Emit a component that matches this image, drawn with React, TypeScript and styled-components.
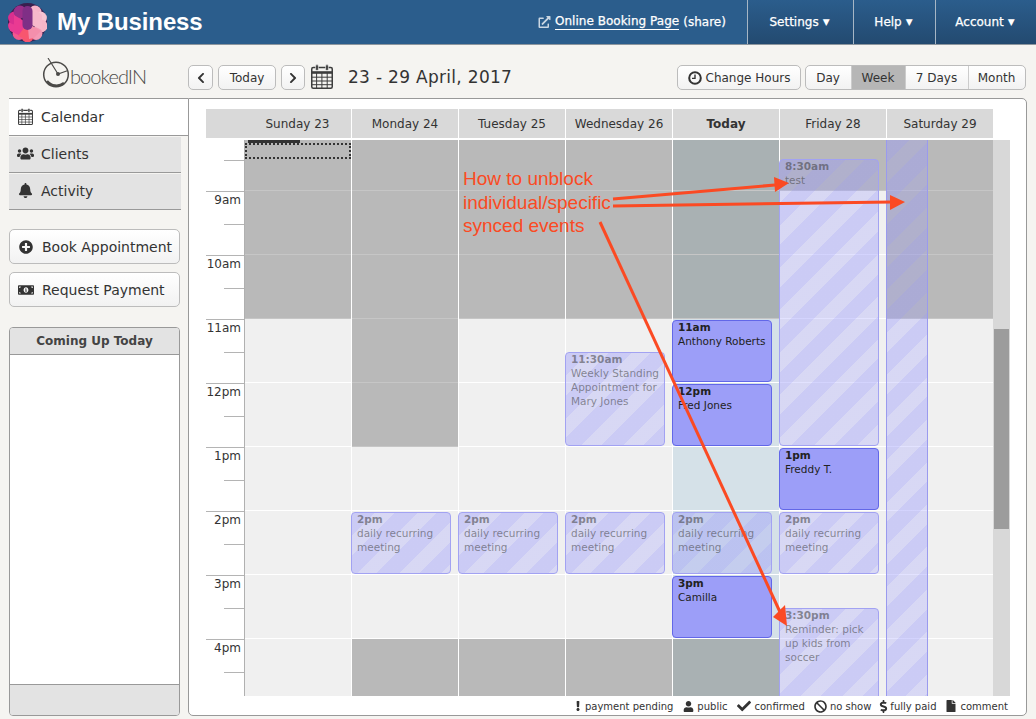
import React from "react";
import styled, { createGlobalStyle, css } from "styled-components";
import {
  FaUsers, FaBell, FaPlusCircle, FaMoneyBillAlt, FaChevronLeft, FaChevronRight,
  FaExclamation, FaUser, FaCheck, FaBan, FaDollarSign, FaFile, FaExternalLinkAlt,
} from "react-icons/fa";

const UI = `"DejaVu Sans", Verdana, sans-serif`;

const Global = createGlobalStyle`
  html, body { margin: 0; padding: 0; background: #f5f4f1; }
  body { font-family: ${UI}; color: #333; width: 1036px; height: 719px; overflow: hidden; }
  * { box-sizing: border-box; }
`;

const Page = styled.div`
  position: relative;
  width: 1036px;
  height: 719px;
  display: flex;
  flex-direction: column;
`;

const TopBar = styled.header`
  height: 45px;
  background: #2b5d8c;
  border-bottom: 1px solid #8d969e;
  display: flex;
  align-items: stretch;
  color: #fff;
  flex: none;
`;
const Brand = styled.div`
  display: flex;
  align-items: center;
  padding-left: 8px;
  gap: 10px;
  flex: 1;
  font: bold 24px "Liberation Sans", Arial, sans-serif;
  letter-spacing: -0.1px;
`;
const ShareLink = styled.div`
  display: flex;
  align-items: center;
  font-size: 12px;
  width: 209px;
  -webkit-text-stroke: 0.25px #fff;
  letter-spacing: 0.02px;
  svg { margin-right: 4px; width: 13px; height: 12px; opacity: 0.75; }
  u { text-decoration: none; border-bottom: 1px solid #fff; padding-bottom: 1px; margin-right: 4px; }
`;
const NavItem = styled.div<{ $w: number }>`
  width: ${(p) => p.$w}px;
  flex: none;
  display: flex;
  align-items: center;
  justify-content: center;
  gap: 4px;
  padding-right: 2px;
  font-size: 12px;
  -webkit-text-stroke: 0.25px #fff;
  border-left: 1px solid #a6b6c5;
  background: linear-gradient(#2b5d8c, #234a70);
`;
const Caret = styled.span`
  font-size: 9px;
  -webkit-text-stroke: 0;
`;

const Toolbar = styled.div`
  height: 53px;
  flex: none;
  display: flex;
  align-items: flex-start;
  padding: 20px 10px 0 42px;
`;
const LogoBox = styled.div`
  width: 146px;
  margin-top: -7px;
  display: flex;
  align-items: flex-start;
  svg { flex: none; }
`;
const LogoText = styled.span`
  color: #4b4a48;
  font: 300 20px/24px Lato, sans-serif;
  letter-spacing: -0.95px;
  margin-top: 6px;
`;
const Btn = styled.div<{ $w: number; $gap?: number }>`
  height: 25px;
  width: ${(p) => p.$w}px;
  margin-left: ${(p) => p.$gap ?? 0}px;
  display: flex;
  align-items: center;
  justify-content: center;
  gap: 4px;
  font-size: 12px;
  color: #333;
  background: linear-gradient(#fff, #f2f2f2);
  border: 1px solid #bcbcbc;
  border-radius: 5px;
  flex: none;
`;
const BigCalSlot = styled.span`
  margin-left: 6px;
  flex: none;
  display: inline-flex;
  margin-top: -1px;
`;
const Title = styled.div`
  font-size: 17px;
  color: #333;
  margin-left: 15px;
  line-height: 25px;
  letter-spacing: 0.3px;
`;
const Spacer = styled.div`
  flex: 1;
`;
const Segments = styled.div`
  display: flex;
  height: 25px;
  margin-left: 4px;
  border: 1px solid #bcbcbc;
  border-radius: 5px;
  overflow: hidden;
  background: linear-gradient(#fff, #f2f2f2);
`;
const Segment = styled.div<{ $w: number; $active?: boolean }>`
  width: ${(p) => p.$w}px;
  display: flex;
  align-items: center;
  justify-content: center;
  padding-right: 1px;
  font-size: 12px;
  & + & { border-left: 1px solid #ccc; }
  ${(p) => p.$active && css`background: #b6b6b6;`}
`;

const Body = styled.div`
  flex: 1;
  display: flex;
  align-items: stretch;
  padding: 0 9px 3px 9px;
  min-height: 0;
`;
const Sidebar = styled.aside`
  width: 179px;
  flex: none;
  display: flex;
  flex-direction: column;
  border-top: 1px solid #999;
`;
const ActiveTab = styled.div`
  height: 37px;
  background: #fff;
  border-bottom: 1px solid #999;
  display: flex;
  align-items: center;
  gap: 8px;
  padding-left: 9px;
  padding-bottom: 1px;
  font-size: 14px;
  flex: none;
  margin-bottom: 1px;
`;
const SideInner = styled.div`
  flex: 1;
  display: flex;
  flex-direction: column;
  min-height: 0;
  padding-right: 8px;
`;
const Tab = styled.div`
  height: 36px;
  background: #e3e3e3;
  border-bottom: 1px solid #999;
  margin-right: -1px;
  display: flex;
  align-items: center;
  gap: 7px;
  padding-left: 7px;
  padding-bottom: 2px;
  font-size: 14px;
  margin-bottom: 1px;
  flex: none;
`;
const IconSlot = styled.span`
  width: 18px;
  display: inline-flex;
  justify-content: center;
  color: #333;
`;
const SideBtn = styled.div<{ $top: number }>`
  height: 35px;
  margin-top: ${(p) => p.$top}px;
  border: 1px solid #bcbcbc;
  border-radius: 5px;
  background: linear-gradient(#fff, #f2f2f2);
  display: flex;
  align-items: center;
  padding-left: 8px;
  gap: 8px;
  font-size: 14px;
  flex: none;
`;
const BtnIcon = styled.span`
  width: 16px;
  display: inline-flex;
  justify-content: center;
  color: #333;
`;
const Upcoming = styled.div`
  margin-top: 20px;
  flex: 1;
  border: 1px solid #999;
  border-radius: 4px;
  background: #fff;
  display: flex;
  flex-direction: column;
  overflow: hidden;
`;
const UpcomingHead = styled.div`
  height: 27px;
  background: #e3e3e3;
  border-bottom: 1px solid #999;
  font-size: 12px;
  font-weight: bold;
  color: #444;
  display: flex;
  align-items: center;
  justify-content: center;
`;
const UpcomingBody = styled.div`
  flex: 1;
`;
const UpcomingFoot = styled.div`
  height: 31px;
  background: #e3e3e3;
  border-top: 1px solid #999;
`;

const Panel = styled.main`
  flex: 1;
  position: relative;
  background: #fff;
  border: 1px solid #999;
  border-radius: 0 5px 5px 5px;
  padding: 10px 16px 0 17px;
  display: flex;
  flex-direction: column;
  min-width: 0;
`;
const HeadRow = styled.div`
  display: flex;
  height: 29px;
  gap: 1px;
  flex: none;
  margin-bottom: 2px;
`;
const HeadCell = styled.div<{ $w: number; $today?: boolean }>`
  width: ${(p) => p.$w}px;
  background: #d9d9d9;
  display: flex;
  align-items: center;
  justify-content: center;
  font-size: 12px;
  font-weight: ${(p) => (p.$today ? "bold" : "normal")};
  padding-left: ${(p) => (p.$w > 120 ? 38 : 0)}px;
  color: #333;
`;
const GridWrap = styled.div`
  height: 556px;
  display: flex;
  overflow: hidden;
  flex: none;
`;
const Gutter = styled.div`
  width: 39px;
  flex: none;
  border-right: 1px solid #b0b0b0;
  background: #fff;
`;
const GutterHour = styled.div`
  height: 64px;
  position: relative;
  border-top: 1px solid #b4b4b4;
  font-size: 12px;
  color: #333;
  text-align: right;
  padding: 1px 3px 0 0;
  &::after {
    content: "";
    position: absolute;
    right: 0;
    top: 32px;
    width: 20px;
    border-top: 1px solid #b4b4b4;
  }
`;
const GutterTop = styled.div`
  height: 51px;
  position: relative;
  &::after {
    content: "";
    position: absolute;
    right: 0;
    top: 20px;
    width: 20px;
    border-top: 1px solid #b4b4b4;
  }
`;
const Days = styled.div`
  display: flex;
  width: 749px;
  flex: none;
`;
const Day = styled.div`
  width: 107px;
  flex: none;
  position: relative;
  border-right: 1px solid #fff;
`;
const Cell = styled.div<{ $h: number; $kind: "free" | "block" | "tfree" | "tblock" }>`
  height: ${(p) => p.$h}px;
  background: ${(p) =>
    ({ free: "#f0f0f0", block: "#b9b9b9", tfree: "#d5e1e8", tblock: "#a9b1b3" }[p.$kind])};
  border-bottom: 1px solid ${(p) => (p.$kind === "free" || p.$kind === "tfree" ? "#fff" : "#c6c6c6")};
`;
const eventBase = css<{ $top: number; $h: number }>`
  position: absolute;
  top: ${(p) => p.$top}px;
  height: ${(p) => p.$h}px;
  left: -1px;
  width: 100px;
  border-radius: 4px;
  font-size: 10.5px;
  line-height: 14px;
  padding: 0 5px;
  overflow: hidden;
  b { display: block; margin-top: -1px; }
`;
const SolidEvent = styled.div<{ $top: number; $h: number }>`
  ${eventBase}
  background: #9c9ef8;
  border: 1px solid #6267e8;
  color: #222;
`;
const stripes = `repeating-linear-gradient(135deg,
  rgba(152,152,252,.42) 0 16px, rgba(153,153,255,.28) 16px 30px)`;
const GhostEvent = styled.div<{ $top: number; $h: number; $bar?: boolean }>`
  ${eventBase}
  background: ${stripes};
  border: 1px solid #a2a2f2;
  color: rgba(60, 60, 60, 0.55);
  ${(p) => p.$bar && css`
    width: 42px;
    left: -1px;
    border-radius: 0;
    border-width: 0 1px;
    border-color: #9a9aee;
  `}
`;
const Scrollbar = styled.div`
  width: 17px;
  flex: none;
  margin-left: -1px;
  background: #d8d8d8;
  padding: 189px 1px 0;
  position: relative;
`;
const Thumb = styled.div`
  height: 200px;
  background: #9c9c9c;
`;
const Legend = styled.div`
  display: flex;
  justify-content: flex-end;
  align-items: center;
  height: 20px;
  padding-top: 1px;
  font-size: 10px;
  color: #333;
  margin-right: 2px;
`;
const LegendItem = styled.span`
  display: inline-flex;
  align-items: center;
  margin-left: 9px;
`;
const LegendIcon = styled.span<{ $w: number }>`
  width: ${(p) => p.$w}px;
  padding-right: 3px;
  display: inline-flex;
  justify-content: center;
  svg { flex: none; }
`;
const Overlay = styled.svg`
  position: absolute;
  left: 0;
  top: 0;
  pointer-events: none;
`;
const Note = styled.div`
  position: absolute;
  left: 463px;
  top: 167px;
  font: 19px/23.5px "Liberation Sans", Arial, sans-serif;
  color: #fb4a23;
`;
const Selection = styled.div`
  position: absolute;
  left: 0;
  top: 3px;
  width: 106px;
  height: 16px;
  border: 2px dotted #333;
`;
const SelectionBar = styled.div`
  position: absolute;
  left: 3px;
  top: 0;
  width: 52px;
  height: 3px;
  background: #333;
`;

const AppLogo = () => {
  const petals: [number, number, string][] = [
    [27, 9, "#f5b3c8"], [32.5, 15, "#f7c4d2"], [33, 23, "#f6b6c8"], [28, 30.5, "#f49ab6"],
    [19.5, 33, "#f8566f"], [11, 30.5, "#f2588f"], [6.5, 23, "#e93a94"], [6.5, 15, "#d92f8f"], [12, 9, "#9a2f8a"],
  ];
  return (
    <svg width="39" height="39" viewBox="0 0 39 39">
      <circle cx="19.5" cy="19.5" r="19.5" fill="#3a1f4f" />
      {petals.map(([x, y, c], i) => (
        <circle key={i} cx={x} cy={y} r="6.4" fill={c} />
      ))}
      <path d="M19.5 20 L6 12 L6 30 L19.5 36 Z" fill="#ea3a92" />
      <path d="M19.5 20 L10 33 L19 37 L27 33 Z" fill="#f8566f" />
      <path d="M19.5 20 L33 28 L26 35 L21 36 Z" fill="#f48fac" />
      <path d="M19.5 20 L24 4 L34 12 L34 27 Z" fill="#f6b8cb" />
      <rect x="14.5" y="3" width="10" height="24" rx="5" fill="#7f2f86" />
    </svg>
  );
};

const BookedLogo = () => (
  <svg width="28" height="30" viewBox="0 0 28 30">
    <circle cx="14" cy="16.5" r="12.3" fill="none" stroke="#4b4a48" strokeWidth="1.5" />
    <path d="M5 23 A12 12 0 0 0 22 25" fill="none" stroke="#4b4a48" strokeWidth="2.4" />
    <path d="M6 0 L16 16 L26 12.5" fill="none" stroke="#4b4a48" strokeWidth="1.1" />
    <circle cx="16" cy="16" r="2" fill="#4b4a48" />
  </svg>
);

const CalIcon = ({ w, h }: { w: number; h: number }) => (
  <svg width={w} height={h} viewBox="0 0 22 25" fill="none" stroke="#3d3d3d">
    <rect x="0.75" y="3.5" width="20.5" height="20.75" rx="1.5" strokeWidth="1.5" />
    <path d="M1 8.5 H21" strokeWidth="2.6" />
    <path d="M1 13.2 H21 M1 17 H21 M1 20.7 H21 M5.6 9 V24 M10.9 9 V24 M16.2 9 V24" strokeWidth="1" />
    <rect x="4.6" y="0.6" width="2.8" height="6" rx="1.4" fill="#3d3d3d" stroke="#fff" strokeWidth="0.6" />
    <rect x="14.6" y="0.6" width="2.8" height="6" rx="1.4" fill="#3d3d3d" stroke="#fff" strokeWidth="0.6" />
  </svg>
);

const ClockIcon = () => (
  <svg width="14" height="14" viewBox="0 0 14 14" fill="none" stroke="#333">
    <circle cx="7" cy="7" r="5.8" strokeWidth="2" />
    <path d="M7 3.4 V7.4 H4" strokeWidth="1.4" />
  </svg>
);

const times = ["9am", "10am", "11am", "12pm", "1pm", "2pm", "3pm", "4pm"];

type Seg = [number, "free" | "block" | "tfree" | "tblock"];

const rows = (blockUntil: number, blockFrom: number, free: "free" | "tfree", block: "block" | "tblock"): Seg[] => {
  const out: Seg[] = [[51, block]];
  for (let i = 0; i < 9; i++) {
    const hour = 9 + i;
    out.push([64, hour < blockUntil || hour >= blockFrom ? block : free]);
  }
  return out;
};

const DayCol = ({ segs, children }: { segs: Seg[]; children?: React.ReactNode }) => (
  <Day>
    {segs.map(([h, k], i) => (
      <Cell key={i} $h={h} $kind={k} />
    ))}
    {children}
  </Day>
);

const at = (h: number) => 51 + (h - 9) * 64;

export default function App() {
  return (
    <Page>
      <Global />
      <TopBar>
        <Brand>
          <AppLogo />
          My Business
        </Brand>
        <ShareLink>
          <FaExternalLinkAlt />
          <u>Online Booking Page</u> (share)
        </ShareLink>
        <NavItem $w={106}>Settings <Caret>▼</Caret></NavItem>
        <NavItem $w={82}>Help <Caret>▼</Caret></NavItem>
        <NavItem $w={101}>Account <Caret>▼</Caret></NavItem>
      </TopBar>
      <Toolbar>
        <LogoBox>
          <BookedLogo />
          <LogoText>bookedIN</LogoText>
        </LogoBox>
        <Btn $w={25}><FaChevronLeft size={12} /></Btn>
        <Btn $w={58} $gap={5}>Today</Btn>
        <Btn $w={24} $gap={5}><FaChevronRight size={12} /></Btn>
        <BigCalSlot><CalIcon w={22} h={25} /></BigCalSlot>
        <Title>23 - 29 April, 2017</Title>
        <Spacer />
        <Btn $w={124}><ClockIcon />Change Hours</Btn>
        <Segments>
          <Segment $w={45}>Day</Segment>
          <Segment $w={54} $active>Week</Segment>
          <Segment $w={63}>7 Days</Segment>
          <Segment $w={57}>Month</Segment>
        </Segments>
      </Toolbar>
      <Body>
        <Sidebar>
          <ActiveTab>
            <CalIcon w={15} h={17} />
            Calendar
          </ActiveTab>
          <SideInner>
            <Tab><IconSlot><FaUsers size={17} /></IconSlot>Clients</Tab>
            <Tab><IconSlot><FaBell size={15} /></IconSlot>Activity</Tab>
            <SideBtn $top={18}><BtnIcon><FaPlusCircle size={14} /></BtnIcon>Book Appointment</SideBtn>
            <SideBtn $top={8}><BtnIcon><FaMoneyBillAlt size={16} /></BtnIcon>Request Payment</SideBtn>
            <Upcoming>
              <UpcomingHead>Coming Up Today</UpcomingHead>
              <UpcomingBody />
              <UpcomingFoot />
            </Upcoming>
          </SideInner>
        </Sidebar>
        <Panel>
          <HeadRow>
            <HeadCell $w={145}>Sunday 23</HeadCell>
            <HeadCell $w={106}>Monday 24</HeadCell>
            <HeadCell $w={106}>Tuesday 25</HeadCell>
            <HeadCell $w={106}>Wednesday 26</HeadCell>
            <HeadCell $w={106} $today>Today</HeadCell>
            <HeadCell $w={106}>Friday 28</HeadCell>
            <HeadCell $w={106}>Saturday 29</HeadCell>
          </HeadRow>
          <GridWrap>
            <Gutter>
              <GutterTop />
              {times.map((t) => (
                <GutterHour key={t}>{t}</GutterHour>
              ))}
            </Gutter>
            <Days>
              <DayCol segs={rows(11, 99, "free", "block")}>
                <Selection />
                <SelectionBar />
              </DayCol>
              <DayCol segs={rows(13, 16, "free", "block")}>
                <GhostEvent $top={at(14) + 1} $h={62}><b>2pm</b>daily recurring meeting</GhostEvent>
              </DayCol>
              <DayCol segs={rows(11, 16, "free", "block")}>
                <GhostEvent $top={at(14) + 1} $h={62}><b>2pm</b>daily recurring meeting</GhostEvent>
              </DayCol>
              <DayCol segs={rows(11, 16, "free", "block")}>
                <GhostEvent $top={at(11) + 33} $h={94}><b>11:30am</b>Weekly Standing Appointment for Mary Jones</GhostEvent>
                <GhostEvent $top={at(14) + 1} $h={62}><b>2pm</b>daily recurring meeting</GhostEvent>
              </DayCol>
              <DayCol segs={rows(11, 16, "tfree", "tblock")}>
                <SolidEvent $top={at(11) + 1} $h={62}><b>11am</b>Anthony Roberts</SolidEvent>
                <SolidEvent $top={at(12) + 1} $h={62}><b>12pm</b>Fred Jones</SolidEvent>
                <GhostEvent $top={at(14) + 1} $h={62}><b>2pm</b>daily recurring meeting</GhostEvent>
                <SolidEvent $top={at(15) + 1} $h={62}><b>3pm</b>Camilla</SolidEvent>
              </DayCol>
              <DayCol segs={rows(9, 99, "free", "block")}>
                <GhostEvent $top={19} $h={287}><b>8:30am</b>test</GhostEvent>
                <SolidEvent $top={at(13) + 1} $h={62}><b>1pm</b>Freddy T.</SolidEvent>
                <GhostEvent $top={at(14) + 1} $h={62}><b>2pm</b>daily recurring meeting</GhostEvent>
                <GhostEvent $top={at(15) + 33} $h={110}><b>3:30pm</b>Reminder: pick up kids from soccer</GhostEvent>
              </DayCol>
              <DayCol segs={rows(11, 99, "free", "block")}>
                <GhostEvent $top={0} $h={556} $bar />
              </DayCol>
            </Days>
            <Scrollbar><Thumb /></Scrollbar>
          </GridWrap>
          <Legend>
            <LegendItem><LegendIcon $w={10}><FaExclamation size={10} /></LegendIcon>payment pending</LegendItem>
            <LegendItem><LegendIcon $w={15}><FaUser size={11} /></LegendIcon>public</LegendItem>
            <LegendItem><LegendIcon $w={18}><FaCheck size={14} /></LegendIcon>confirmed</LegendItem>
            <LegendItem><LegendIcon $w={16}><FaBan size={13} /></LegendIcon>no show</LegendItem>
            <LegendItem><LegendIcon $w={10}><FaDollarSign size={13} /></LegendIcon>fully paid</LegendItem>
            <LegendItem><LegendIcon $w={15}><FaFile size={12} /></LegendIcon>comment</LegendItem>
          </Legend>
        </Panel>
      </Body>
      <Note>How to unblock<br />individual/specific<br />synced events</Note>
      <Overlay width="1036" height="719" viewBox="0 0 1036 719">
        <g stroke="#fb4a23" strokeWidth="3" fill="none">
          <path d="M613 199 L775 185" />
          <path d="M613 206 L892 202" />
          <path d="M600 222 L780 612" />
        </g>
        <g fill="#fb4a23">
          <path d="M789 183 L774 177 L775 192 Z" />
          <path d="M905 202 L890 195 L890 210 Z" />
          <path d="M787 626 L773 617 L785 605 Z" />
        </g>
      </Overlay>
    </Page>
  );
}
